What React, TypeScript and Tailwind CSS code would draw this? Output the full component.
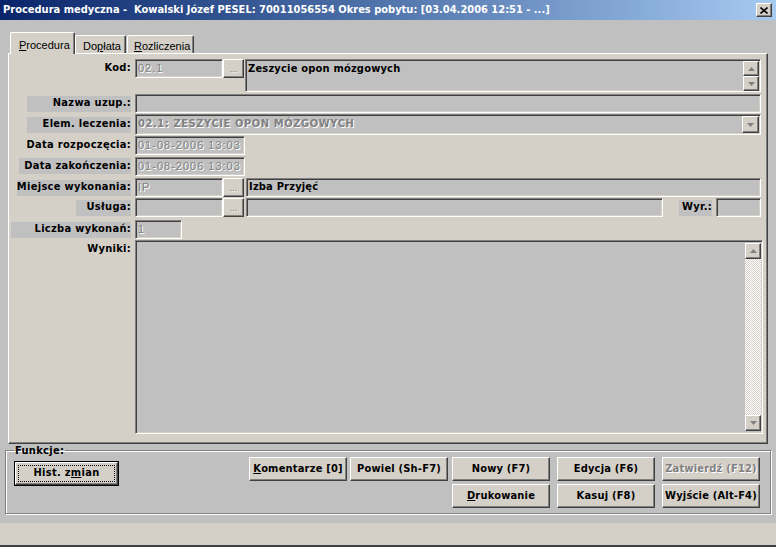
import React from "react";

const raised =
  "bg-[#d4d0c8] border border-t-white border-l-white border-b-[#404040] border-r-[#404040] shadow-[inset_-1px_-1px_0_#808080]";
const sunken =
  "bg-[#c0c0c0] border border-t-[#808080] border-l-[#808080] border-b-white border-r-white shadow-[inset_1px_1px_0_#404040,inset_-1px_-1px_0_#d4d0c8]";
const dis = "text-[#808080] [text-shadow:1px_1px_0_#fff]";
const sans = "font-['Liberation_Sans',Arial,sans-serif]";

function Tri({ up }: { up?: boolean }) {
  return (
    <svg width="7" height="4" viewBox="0 0 7 4">
      <path d={up ? "M3.5 0 L7 4 L0 4 Z" : "M0 0 L7 0 L3.5 4 Z"} fill="#808080" />
    </svg>
  );
}

function Label({ text, bg = "" }: { text: string; bg?: string }) {
  return (
    <div className="w-[120px] shrink-0 flex justify-end">
      <span className={`h-[16px] flex items-center justify-end font-bold whitespace-nowrap tracking-[0.3px] ${bg}`}>
        {text}
      </span>
    </div>
  );
}

function Dots() {
  return (
    <div className={`${raised} w-[21px] h-[19px] shrink-0 flex items-end justify-center pb-[3px] leading-none text-[9px] ${dis}`}>
      ...
    </div>
  );
}

function Btn({ children, off }: { children: React.ReactNode; off?: boolean }) {
  return (
    <div className={`${raised} w-[98px] h-[24px] flex items-center justify-center font-bold whitespace-nowrap tracking-[0.2px] ${off ? dis : "text-black"}`}>
      {children}
    </div>
  );
}

export default function App() {
  return (
    <div className="w-[776px] h-[547px] overflow-hidden bg-[#c0c0c0] flex flex-col font-['DejaVu_Sans_Condensed','DejaVu_Sans',sans-serif] text-[11px] text-black">
      {/* title bar */}
      <div className="h-[20px] shrink-0 flex items-center pl-[3px] pr-[4px] bg-linear-to-r from-[#0a246a] to-[#a6caf0] text-white font-bold text-[11px]">
        <span className="flex-1 whitespace-pre">
          Procedura medyczna -  Kowalski Józef PESEL: 70011056554 Okres pobytu: [03.04.2006 12:51 - ...]
        </span>
        <div className={`${raised} w-[16px] h-[14px] flex items-center justify-center`}>
          <svg width="8" height="7" viewBox="0 0 8 7">
            <path d="M0.5 0.5 L7.5 6.5 M7.5 0.5 L0.5 6.5" stroke="#000" strokeWidth="1.6" />
          </svg>
        </div>
      </div>

      {/* tabs */}
      <div className={`flex items-end h-[21px] mt-[12px] pl-[10px] relative z-10 ${sans}`}>
        <div className="h-[22px] -mb-px w-[65px] bg-[#d4d0c8] border-t border-l border-t-white border-l-white border-r border-r-[#404040] shadow-[inset_-1px_0_0_#808080] rounded-t-[2px] flex items-start pt-[4px] pl-[8px]">
          <span><u>P</u>rocedura</span>
        </div>
        <div className="h-[18px] w-[51px] bg-[#d4d0c8] border-t border-l border-t-white border-l-white border-r border-r-[#404040] shadow-[inset_-1px_0_0_#808080] rounded-t-[2px] flex items-start pt-[2px] pl-[7px]">
          <span>Do<u>p</u>łata</span>
        </div>
        <div className="h-[18px] w-[67px] ml-[1px] bg-[#d4d0c8] border-t border-l border-t-white border-l-white border-r border-r-[#404040] shadow-[inset_-1px_0_0_#808080] rounded-t-[2px] flex items-start pt-[2px] pl-[6px]">
          <span><u>R</u>ozliczenia</span>
        </div>
      </div>

      {/* panel */}
      <div className="ml-[8px] w-[760px] h-[391px] shrink-0 bg-[#d4d0c8] border border-t-white border-l-white border-b-[#404040] border-r-[#404040] shadow-[inset_-1px_-1px_0_#808080] pt-[5px] pl-[2px] pr-[6px] flex flex-col">
        {/* Kod */}
        <div className="flex items-start h-[33px]">
          <div className="h-[19px] flex items-center">
            <Label text="Kod:" />
          </div>
          <div className={`${sunken} ml-[4px] w-[88px] h-[19px] shrink-0 pl-[2px] flex items-center tracking-[1px] ${sans} ${dis}`}>02.1</div>
          <Dots />
          <div className={`${sunken} ml-[1px] flex-1 h-[33px] flex`}>
            <div className="flex-1 pl-[2px] pt-[1px] font-bold tracking-[0.2px]">Zeszycie opon mózgowych</div>
            <div className="flex flex-col w-[16px] mr-[1px] mt-[1px]">
              <div className={`${raised} h-[15px] flex items-center justify-center`}><Tri up /></div>
              <div className={`${raised} h-[15px] flex items-center justify-center`}><Tri /></div>
            </div>
          </div>
        </div>

        {/* Nazwa uzup. */}
        <div className="flex items-center h-[19px] mt-[2px]">
          <Label text="Nazwa uzup.:" bg="bg-[#c0c0c0] w-[104px]" />
          <div className={`${sunken} ml-[4px] flex-1 h-[19px]`} />
        </div>

        {/* Elem. leczenia */}
        <div className="flex items-center h-[21px] mt-[1px]">
          <Label text="Elem. leczenia:" bg="bg-[#c0c0c0] w-[104px]" />
          <div className={`${sunken} ml-[4px] flex-1 h-[21px] flex items-center`}>
            <span className={`flex-1 pl-[2px] font-bold tracking-[0.6px] ${dis}`}>02.1: ZESZYCIE OPON MÓZGOWYCH</span>
            <div className={`${raised} w-[17px] h-[17px] mr-[1px] flex items-center justify-center`}><Tri /></div>
          </div>
        </div>

        {/* Data rozpoczęcia */}
        <div className="flex items-center h-[19px] mt-[1px]">
          <Label text="Data rozpoczęcia:" />
          <div className={`${sunken} ml-[4px] w-[110px] h-[19px] pl-[2px] flex items-center tracking-[1px] ${sans} ${dis}`}>01-08-2006 13:03</div>
        </div>

        {/* Data zakończenia */}
        <div className="flex items-center h-[20px] mt-[1px]">
          <Label text="Data zakończenia:" bg="bg-[#c0c0c0] w-[112px]" />
          <div className={`${sunken} ml-[4px] w-[110px] h-[19px] pl-[2px] flex items-center tracking-[1px] ${sans} ${dis}`}>01-08-2006 13:03</div>
        </div>

        {/* Miejsce wykonania */}
        <div className="flex items-center h-[19px] mt-[2px]">
          <Label text="Miejsce wykonania:" bg="bg-[#c0c0c0] w-[114px]" />
          <div className={`${sunken} ml-[4px] w-[88px] h-[19px] shrink-0 pl-[2px] flex items-center tracking-[1px] ${sans} ${dis}`}>IP</div>
          <Dots />
          <div className={`${sunken} ml-[2px] flex-1 h-[19px] pl-[2px] flex items-center font-bold tracking-[0.2px]`}>Izba Przyjęć</div>
        </div>

        {/* Usługa */}
        <div className="flex items-center h-[19px] mt-[1px]">
          <Label text="Usługa:" bg="bg-[#c0c0c0] w-[55px]" />
          <div className={`${sunken} ml-[4px] w-[88px] h-[19px] shrink-0`} />
          <Dots />
          <div className={`${sunken} ml-[2px] flex-1 h-[19px]`} />
          <span className="ml-[16px] w-[33px] h-[16px] bg-[#c0c0c0] flex items-center justify-end font-bold tracking-[0.3px]">Wyr.:</span>
          <div className={`${sunken} ml-[4px] w-[45px] h-[19px]`} />
        </div>

        {/* Liczba wykonań */}
        <div className="flex items-center h-[19px] mt-[3px]">
          <Label text="Liczba wykonań:" bg="bg-[#c0c0c0] w-[120px]" />
          <div className={`${sunken} ml-[4px] w-[47px] h-[19px] pl-[2px] flex items-center ${sans} ${dis}`}>1</div>
        </div>

        {/* Wyniki */}
        <div className="flex items-start h-[194px] mt-[1px] -mr-[2px]">
          <div className="h-[19px] flex items-center">
            <Label text="Wyniki:" />
          </div>
          <div className={`${sunken} ml-[4px] flex-1 h-[194px] flex justify-end p-[2px] pr-[1px]`}>
            <div className="w-[16px] h-full flex flex-col bg-[repeating-conic-gradient(#fff_0_25%,#d4d0c8_0_50%)] bg-[length:2px_2px]">
              <div className={`${raised} h-[16px] flex items-center justify-center`}><Tri up /></div>
              <div className="flex-1" />
              <div className={`${raised} h-[16px] flex items-center justify-center`}><Tri /></div>
            </div>
          </div>
        </div>
      </div>

      {/* Funkcje */}
      <fieldset className="ml-[5px] w-[766px] h-[70px] shrink-0 border border-[#808080] shadow-[inset_1px_1px_0_#fff,1px_1px_0_#fff] px-[8px] flex">
        <legend className="px-[1px] font-bold leading-[13px] tracking-[0.3px]">Funkcje:</legend>
        <div className="flex w-full pr-[2px]">
          <div className="mt-[4px] w-[105px] h-[25px] border border-black">
            <div className={`${raised} w-full h-full p-[2px]`}>
              <div className="w-full h-full border border-dotted border-black flex items-center justify-center font-bold tracking-[0.3px]">
                Hist. z<u>m</u>ian
              </div>
            </div>
          </div>
          <div className="ml-auto grid grid-cols-[101px_102px_105px_105px_98px] gap-y-[3px] h-fit">
            <Btn><u>K</u>omentarze [0]</Btn>
            <Btn>Powiel (Sh-F7)</Btn>
            <Btn>Nowy (F7)</Btn>
            <Btn>Edycja (F6)</Btn>
            <Btn off>Zatwierdź (F12)</Btn>
            <div />
            <div />
            <Btn><u>D</u>rukowanie</Btn>
            <Btn>Kasuj (F8)</Btn>
            <Btn>Wyjście (Alt-F4)</Btn>
          </div>
        </div>
      </fieldset>

      <div className="flex-1" />
      {/* status bar */}
      <div className="h-[24px] shrink-0 bg-[#d4d0c8] border-b-2 border-b-[#404040]" />
    </div>
  );
}
